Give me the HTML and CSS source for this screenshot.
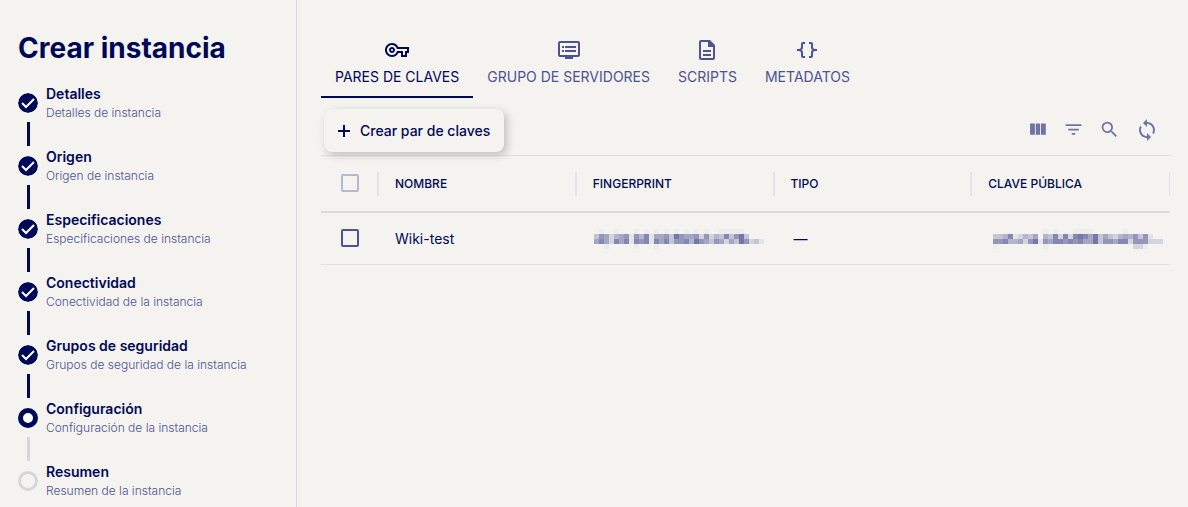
FILE: index.html
```html
<!DOCTYPE html>
<html lang="es">
<head>
    <meta charset="UTF-8">
    <meta name="viewport" content="width=device-width, initial-scale=1.0">
    <title>Crear instancia</title>
    <link rel="stylesheet" href="styles.css">
</head>
<body>
    <div class="layout">
        <aside class="sidebar">
            <h1>Crear instancia</h1>
            <ol class="steps">
                <li class="step done">
                    <div class="track"><svg class="dot" viewBox="0 0 20 20"><circle cx="10" cy="10" r="10"/><path d="M4 10l4 4 8-8"/></svg></div>
                    <div><h2>Detalles</h2><p>Detalles de instancia</p></div>
                </li>
                <li class="step done">
                    <div class="track"><svg class="dot" viewBox="0 0 20 20"><circle cx="10" cy="10" r="10"/><path d="M4 10l4 4 8-8"/></svg></div>
                    <div><h2>Origen</h2><p>Origen de instancia</p></div>
                </li>
                <li class="step done">
                    <div class="track"><svg class="dot" viewBox="0 0 20 20"><circle cx="10" cy="10" r="10"/><path d="M4 10l4 4 8-8"/></svg></div>
                    <div><h2>Especificaciones</h2><p>Especificaciones de instancia</p></div>
                </li>
                <li class="step done">
                    <div class="track"><svg class="dot" viewBox="0 0 20 20"><circle cx="10" cy="10" r="10"/><path d="M4 10l4 4 8-8"/></svg></div>
                    <div><h2>Conectividad</h2><p>Conectividad de la instancia</p></div>
                </li>
                <li class="step done">
                    <div class="track"><svg class="dot" viewBox="0 0 20 20"><circle cx="10" cy="10" r="10"/><path d="M4 10l4 4 8-8"/></svg></div>
                    <div><h2>Grupos de seguridad</h2><p>Grupos de seguridad de la instancia</p></div>
                </li>
                <li class="step current" aria-current="step">
                    <div class="track"><span class="dot"></span></div>
                    <div><h2>Configuración</h2><p>Configuración de la instancia</p></div>
                </li>
                <li class="step pending">
                    <div class="track"><span class="dot"></span></div>
                    <div><h2>Resumen</h2><p>Resumen de la instancia</p></div>
                </li>
            </ol>
        </aside>

        <main class="content">
            <div class="tabs" role="tablist">
                <button class="tab active" role="tab" aria-selected="true">
                    <svg class="icon" viewBox="0 0 24 24"><path d="M22 19h-6v-4h-2.68c-1.14 2.42-3.6 4-6.32 4-3.86 0-7-3.14-7-7s3.14-7 7-7c2.72 0 5.17 1.58 6.32 4H24v6h-2v4zm-4-2h2v-4h2v-2H11.94l-.23-.67C11.01 8.34 9.11 7 7 7c-2.76 0-5 2.24-5 5s2.24 5 5 5c2.11 0 4.01-1.34 4.71-3.33l.23-.67H18v4zM7 15c-1.65 0-3-1.35-3-3s1.35-3 3-3 3 1.35 3 3-1.35 3-3 3zm0-4c-.55 0-1 .45-1 1s.45 1 1 1 1-.45 1-1-.45-1-1-1z"/></svg>
                    PARES DE CLAVES
                </button>
                <button class="tab" role="tab" aria-selected="false">
                    <svg class="icon" viewBox="0 0 24 24"><path d="M21 3H3c-1.1 0-2 .9-2 2v12c0 1.100.9 2 2 2h5v2h8v-2h5c1.100 0 1.990-.9 1.990-2L23 5c0-1.100-.9-2-2-2zm0 14H3V5h18v12zm-2-9H8v2h11V8zm0 4H8v2h11v-2zM7 8H5v2h2V8zm0 4H5v2h2v-2z"/></svg>
                    GRUPO DE SERVIDORES
                </button>
                <button class="tab" role="tab" aria-selected="false">
                    <svg class="icon" viewBox="0 0 24 24"><path d="M6 2h9l5 5v13a2 2 0 0 1-2 2H6a2 2 0 0 1-2-2V4a2 2 0 0 1 2-2zm0 2v16h12V9h-5V4H6zm2 8h8v2H8v-2zm0 4h8v2H8v-2z"/></svg>
                    SCRIPTS
                </button>
                <button class="tab" role="tab" aria-selected="false">
                    <svg class="icon" viewBox="0 0 24 24"><path d="M8 4a2 2 0 0 0-2 2v3a2 2 0 0 1-2 2H2v2h2a2 2 0 0 1 2 2v3a2 2 0 0 0 2 2h2v-2H8v-4a2 2 0 0 0-2-2 2 2 0 0 0 2-2V6h2V4H8zm8 0a2 2 0 0 1 2 2v3a2 2 0 0 0 2 2h2v2h-2a2 2 0 0 0-2 2v3a2 2 0 0 1-2 2h-2v-2h2v-4a2 2 0 0 1 2-2 2 2 0 0 1-2-2V6h-2V4h2z"/></svg>
                    METADATOS
                </button>
            </div>

            <div class="toolbar">
                <button class="create">
                    <svg viewBox="0 0 12 12"><path d="M6 0v12M0 6h12"/></svg>
                    Crear par de claves
                </button>
                <div class="tools">
                    <button class="tool" aria-label="Columnas"><svg viewBox="0 0 24 24"><path d="M10 18h5V5h-5v13zm-6.500 0h5.500V5H3.500v13zM16 5v13h5.500V5H16z"/></svg></button>
                    <button class="tool" aria-label="Filtrar"><svg viewBox="0 0 24 24"><path d="M10 18h4v-2h-4v2zM3 6v2h18V6H3zm3 7h12v-2H6v2z"/></svg></button>
                    <button class="tool" aria-label="Buscar"><svg viewBox="0 0 24 24"><path d="M15.500 14h-.79l-.28-.27A6.471 6.471 0 0 0 16 9.500 6.500 6.500 0 1 0 9.500 16c1.610 0 3.090-.59 4.230-1.570l.27.28v.79l5 4.990L20.490 19l-4.990-5zm-6 0C7.010 14 5 11.990 5 9.500S7.010 5 9.500 5 14 7.010 14 9.500 11.990 14 9.500 14z"/></svg></button>
                    <button class="tool refresh" aria-label="Actualizar"><svg viewBox="0 0 24 24"><path d="M12 4V1L8 5l4 4V6c3.310 0 6 2.690 6 6 0 1.010-.25 1.970-.7 2.800l1.460 1.460A7.930 7.930 0 0 0 20 12c0-4.420-3.580-8-8-8zm0 14c-3.310 0-6-2.690-6-6 0-1.010.25-1.970.7-2.800L5.240 7.740A7.930 7.930 0 0 0 4 12c0 4.420 3.580 8 8 8v3l4-4-4-4v3z"/></svg></button>
                </div>
            </div>

            <table class="keys">
                <thead>
                    <tr>
                        <th class="check"><input type="checkbox" aria-label="Seleccionar todo"></th>
                        <th>NOMBRE</th>
                        <th>FINGERPRINT</th>
                        <th>TIPO</th>
                        <th>CLAVE PÚBLICA</th>
                    </tr>
                </thead>
                <tbody>
                    <tr>
                        <td class="check"><input type="checkbox" aria-label="Seleccionar Wiki-test"></td>
                        <td>Wiki-test</td>
                        <td><svg class="masked fingerprint" viewBox="0 0 34 4" data-rows="0100100010101010101010100111110000,3652456164715563865562624373683000,5752757176717573667486536525386231,0010000010001000000000000000000000"></svg></td>
                        <td><span class="empty">—</span></td>
                        <td><svg class="masked public-key" viewBox="0 0 34 4" data-rows="0000000000101000111100000010000000,3347124350437272787583532454636100,6674452681657767675583665772666222,1000000000100000000000000000221000"></svg></td>
                    </tr>
                </tbody>
            </table>
        </main>
    </div>

    <script>
        // each digit is the strength of one block of a masked value
        document.querySelectorAll('.masked').forEach(svg => {
            svg.dataset.rows.split(',').forEach((row, y) => {
                [...row].forEach((level, x) => {
                    if (level === '0') return;
                    const edge = level === '1' && (y === 0 || y === 3);
                    const rect = document.createElementNS('http://www.w3.org/2000/svg', 'rect');
                    rect.setAttribute('x', x);
                    rect.setAttribute('y', y);
                    rect.setAttribute('width', 1);
                    rect.setAttribute('height', 1);
                    rect.setAttribute('opacity', edge ? 0.05 : level / 8);
                    svg.appendChild(rect);
                });
            });
        });
    </script>
</body>
</html>
```

FILE: styles.css
```css
* { box-sizing: border-box; }
body { margin: 0; background: #f4f3f0; color: #000957; font-family: Inter, "Liberation Sans", sans-serif; font-size: 14px; }
h1, h2, p, ol { margin: 0; padding: 0; }
button { border: 0; background: none; color: inherit; font: inherit; cursor: pointer; }

.layout { display: flex; min-height: 100vh; }
.sidebar { flex: 0 0 297px; padding: 30px 18px 0; border-right: 1px solid #d6d6e0; }
.sidebar h1 { font-size: 28px; line-height: 36px; font-weight: 700; margin-bottom: 19px; }

.steps { list-style: none; }
.step { display: flex; gap: 8px; }
.step h2 { font-size: 14px; line-height: 18px; font-weight: 600; }
.step p { font-size: 12px; line-height: 20px; font-weight: 300; color: #4d5290; }
.track { width: 20px; padding-top: 8px; }
.dot { display: block; width: 20px; height: 20px; border-radius: 50%; }
.dot circle { fill: #000957; }
.dot path { fill: none; stroke: #fff; stroke-width: 2; }
.step:not(:last-child) .track::after { content: ""; display: block; width: 3px; height: 24px; margin: 9px 9px 2px; background: #000957; }
.current .dot { border: 5px solid #000957; background: #fff; }
.step.current:not(:last-child) .track::after { background: #d6d5dc; }
.pending .dot { border: 3px solid #d6d5dc; }

.content { flex: 1; min-width: 0; padding: 24px 18px 0 24px; }
.tabs { display: flex; }
.tab { display: flex; flex-direction: column; align-items: center; gap: 6px; height: 74px; padding: 14px 14px 0; border-bottom: 2px solid transparent; color: #4d5290; line-height: 18px; }
.tab.active { color: #000957; border-color: #000957; }
.icon { width: 24px; height: 24px; fill: currentColor; }

.toolbar { display: flex; align-items: center; justify-content: space-between; height: 57px; padding: 8px 11px 0 3px; }
.create { display: flex; align-items: center; gap: 10px; height: 43px; padding: 0 14px; border-radius: 8px; background: #f4f3f0; box-shadow: 3px 3px 8px rgba(0, 0, 0, 0.22); font-weight: 500; }
.create svg { width: 12px; height: 12px; fill: none; stroke: currentColor; stroke-width: 2; }
.tools { display: flex; align-items: center; gap: 15px; padding-bottom: 2px; }
.tool { display: flex; padding: 0; color: #7074a3; }
.tool svg { width: 21px; height: 21px; fill: currentColor; }
.refresh svg { width: 24px; height: 24px; }

.keys { width: 100%; table-layout: fixed; border-collapse: separate; border-spacing: 0; border-top: 1px solid #dfdfe9; }
.keys th, .keys td { padding: 0 16px; text-align: left; }
.keys th { height: 57px; padding-bottom: 1px; border-bottom: 2px solid #d9d9e3; font-size: 12px; font-weight: 500; background: linear-gradient(#e4e4e8, #e4e4e8) no-repeat right center / 2px 24px; }
.keys th:last-child { background-size: 1px 24px; }
.keys td { height: 52px; border-bottom: 1px solid #dfdfe9; }
.keys .check { width: 58px; padding: 0 20px 1px; }
.keys input { appearance: none; display: block; width: 18px; height: 18px; margin: 0; border: 2px solid #4d5290; border-radius: 2px; }
.keys th input { border-color: #b6b8cf; }
.keys input:checked { background: #4d5290; }
.masked { display: block; width: 170px; height: 20px; fill: #7478a8; shape-rendering: crispEdges; }
.fingerprint { margin-left: 1px; }
.public-key { margin-left: 5px; }
.empty { margin-left: 3px; }
```
